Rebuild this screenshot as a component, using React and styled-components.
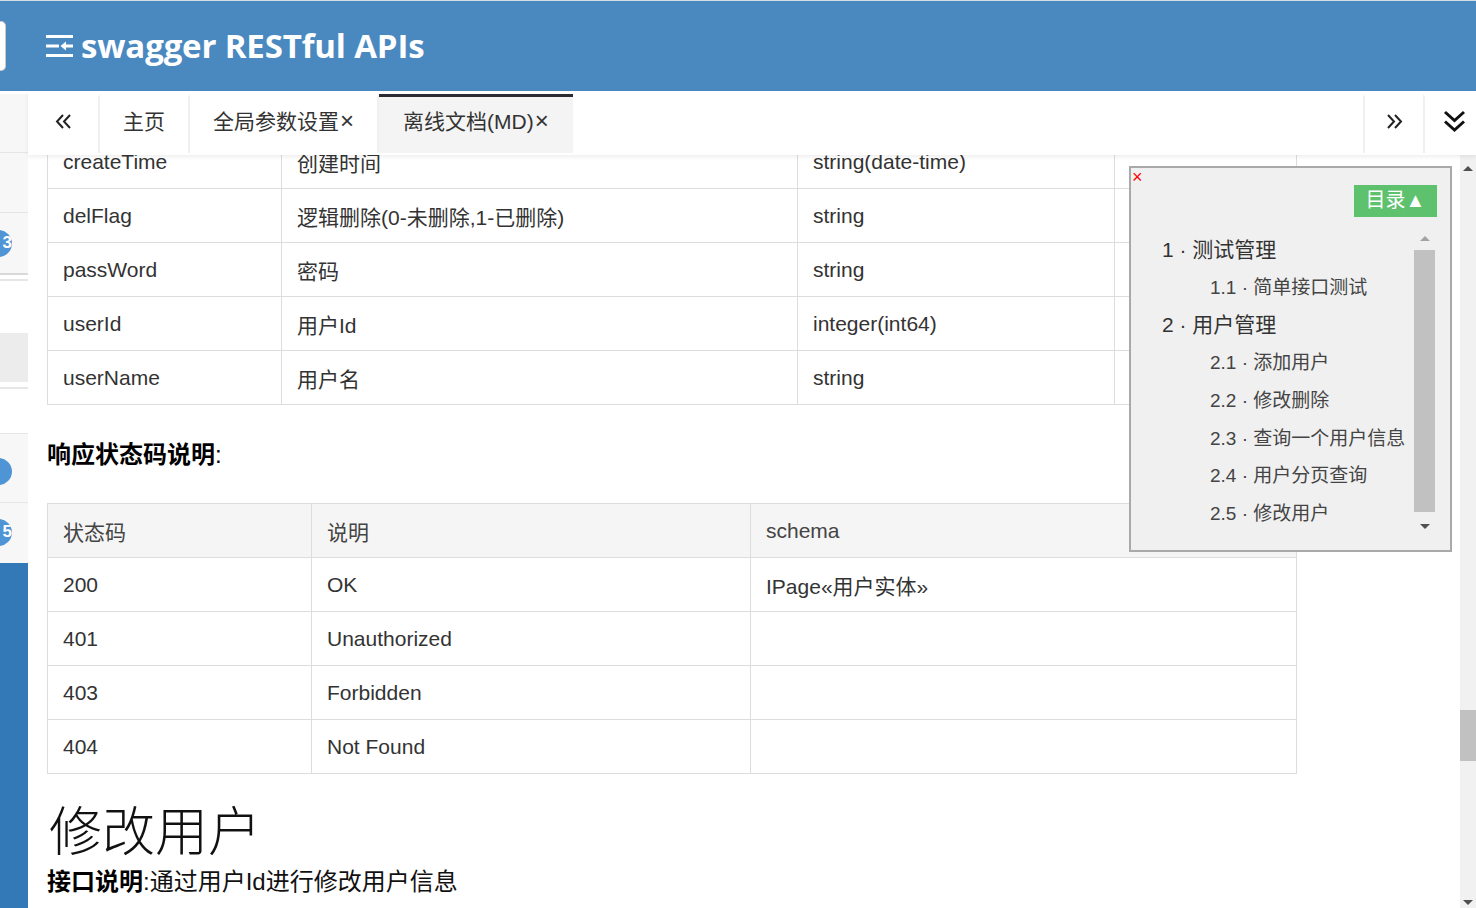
import React from 'react';
import styled, { createGlobalStyle } from 'styled-components';

const GlobalStyle = createGlobalStyle`
  html, body { margin: 0; padding: 0; height: 100%; overflow: hidden; background: #fff; }
  body { font-family: "Liberation Sans", "Noto Sans CJK SC", sans-serif; color: #333; }
  #root { height: 100%; }
`;

const FONT = `"Liberation Sans", "Noto Sans CJK SC", sans-serif`;

const Page = styled.div`
  display: flex;
  flex-direction: column;
  width: 1476px;
  height: 908px;
  overflow: hidden;
`;

/* ---------- header ---------- */
const Header = styled.header`
  flex: none;
  height: 91px;
  box-sizing: border-box;
  border-top: 1px solid #d6dde4;
  background: #4a89c0;
  display: flex;
  align-items: center;
`;

const SearchStub = styled.div`
  flex: none;
  width: 6px;
  height: 50px;
  box-sizing: border-box;
  background: #fff;
  border: 1px solid #c9c9c9;
  border-left: none;
  border-radius: 0 5px 5px 0;
`;

const Brand = styled.div`
  display: flex;
  align-items: center;
  gap: 8px;
  margin-left: 40px;
  color: #fff;
`;

const BrandTitle = styled.h1`
  margin: 0;
  font-family: "Open Sans", "Noto Sans", sans-serif;
  font-weight: 700;
  font-size: 33px;
  line-height: 40px;
  color: #fff;
  letter-spacing: -0.15px;
`;

/* ---------- body ---------- */
const Body = styled.div`
  flex: 1;
  min-height: 0;
  display: flex;
`;

const Sidebar = styled.aside`
  flex: none;
  width: 28px;
  display: flex;
  flex-direction: column;
  overflow: hidden;
`;

const SideSlot = styled.div`
  flex: ${p => (p.$grow ? '1' : 'none')};
  height: ${p => (p.$grow ? 'auto' : `${p.$h}px`)};
  box-sizing: border-box;
  background: ${p => p.$bg || '#f7f7f7'};
  border-top: ${p => p.$top || 'none'};
  border-bottom: ${p => p.$bottom || 'none'};
  display: flex;
  align-items: center;
  overflow: hidden;
`;

const SideBadge = styled.span`
  flex: none;
  width: 30px;
  height: 27px;
  margin-left: -18px;
  margin-top: ${p => p.$dy || 0}px;
  border-radius: 14px;
  background: #4f94d4;
  color: #fff;
  font: bold 17px ${FONT};
  display: flex;
  align-items: center;
  justify-content: flex-end;
  padding-right: 0;
  box-sizing: border-box;
`;

const Main = styled.div`
  flex: 1;
  min-width: 0;
  display: flex;
  flex-direction: column;
`;

/* ---------- tabs ---------- */
const TabBar = styled.nav`
  flex: none;
  height: 64px;
  box-sizing: border-box;
  padding-top: 3px;
  background: #fff;
  display: flex;
  align-items: flex-start;
  position: relative;
  z-index: 2;
  box-shadow: 0 2px 4px rgba(0, 0, 0, 0.07);
`;

const Tab = styled.div`
  flex: none;
  height: 59px;
  box-sizing: border-box;
  padding: 0 ${p => p.$pad ?? 23}px 7px ${p => p.$padL ?? p.$pad ?? 23}px;
  width: ${p => (p.$w ? `${p.$w}px` : 'auto')};
  display: flex;
  align-items: center;
  justify-content: ${p => (p.$center ? 'center' : 'flex-start')};
  font-size: 21px;
  color: #333;
  white-space: nowrap;
  border-top: 3px solid ${p => (p.$active ? '#2b2b36' : 'transparent')};
  background: ${p => (p.$active ? '#f4f4f4' : '#fff')};
  border-right: ${p => (p.$sep ? '2px solid #f0f0f0' : 'none')};
  border-left: ${p => (p.$sepL ? '2px solid #f0f0f0' : 'none')};
`;

const TabLabel = styled.span`
  line-height: 30px;
`;

const TabSpacer = styled.div`
  flex: 1;
`;

const Close = styled.span`
  margin-left: 1px;
  font-size: 24px;
`;

const Icon = styled.svg`
  flex: none;
  display: block;
  width: ${p => p.$w}px;
  height: ${p => p.$h}px;
`;

/* ---------- content ---------- */
const ContentRow = styled.div`
  flex: 1;
  min-height: 0;
  display: flex;
  position: relative;
`;

const Viewport = styled.div`
  flex: 1;
  min-width: 0;
  overflow: hidden;
`;

const Scrolled = styled.div`
  padding-left: 19px;
  transform: translateY(-21px);
`;

const Table = styled.div`
  width: 1250px;
  box-sizing: border-box;
  border-top: 1px solid #dddddd;
  border-left: 1px solid #dddddd;
  margin-top: ${p => p.$mt || 0}px;
`;

const Row = styled.div`
  display: grid;
  grid-template-columns: ${p => p.$cols};
  background: ${p => (p.$head ? '#f5f5f5' : '#fff')};
`;

const Cell = styled.div`
  height: 54px;
  box-sizing: border-box;
  border-right: 1px solid #dddddd;
  border-bottom: 1px solid #dddddd;
  padding: 0 15px;
  display: flex;
  align-items: center;
  font-size: 21px;
  color: ${p => (p.$head ? '#444' : '#333')};
  white-space: nowrap;
  overflow: hidden;
`;

const SectionLabel = styled.div`
  margin-top: 32px;
  font-size: 24px;
  line-height: 36px;
  color: #000;
  b { font-weight: 700; }
`;

const Title = styled.h2`
  margin: 24px 0 0 2px;
  font-family: "Noto Sans CJK SC", sans-serif;
  font-weight: 300;
  font-size: 53px;
  line-height: 60px;
  color: #111;
`;

const Desc = styled.p`
  margin: 9px 0 0;
  font-size: 24px;
  line-height: 30px;
  color: #111;
  b { font-weight: 700; color: #000; }
`;

/* ---------- page scrollbar ---------- */
const ScrollBar = styled.div`
  flex: none;
  width: 16px;
  background: #f1f1f1;
  display: flex;
  flex-direction: column;
  align-items: center;
`;

const ArrowBtn = styled.div`
  flex: none;
  height: 17px;
  width: 100%;
  display: flex;
  align-items: center;
  justify-content: center;
  margin-top: ${p => p.$mt || 0}px;
  margin-bottom: ${p => p.$mb || 0}px;
`;

const Tri = styled.span`
  width: 0;
  height: 0;
  border-left: ${p => p.$w / 2}px solid transparent;
  border-right: ${p => p.$w / 2}px solid transparent;
  ${p => (p.$down ? 'border-top' : 'border-bottom')}: ${p => p.$h}px solid ${p => p.$c || '#505050'};
`;

const Track = styled.div`
  flex: 1;
  width: 100%;
  display: flex;
  flex-direction: column;
  align-items: stretch;
`;

const Thumb = styled.div`
  flex: none;
  margin-top: ${p => p.$mt}px;
  height: ${p => p.$h}px;
  background: #c1c1c1;
`;

/* ---------- TOC overlay ---------- */
const Toc = styled.div`
  position: absolute;
  left: 1101px;
  top: 11px;
  z-index: 3;
  width: 323px;
  height: 386px;
  box-sizing: border-box;
  background: #f0f0f0;
  border: 2px solid #a9a9a9;
  display: flex;
  flex-direction: column;
`;

const TocClose = styled.span`
  align-self: flex-start;
  height: 15px;
  margin-top: 2px;
  margin-left: 1px;
  font: 18px/15px ${FONT};
  color: #ff0000;
`;

const TocButton = styled.button`
  align-self: flex-end;
  margin: 0 13px 0 0;
  width: 83px;
  height: 32px;
  border: none;
  padding: 0 0 2px;
  background: #5dc16e;
  color: #fff;
  font: 20px/30px ${FONT};
  display: flex;
  align-items: center;
  justify-content: center;
`;

const TocBody = styled.div`
  margin-top: 13px;
  display: flex;
  height: 308px;
  margin-right: 15px;
`;

const TocList = styled.ul`
  flex: 1;
  list-style: none;
  margin: 0;
  padding: 0 0 0 31px;
  overflow: hidden;
`;

const TocItem = styled.li`
  height: 37.7px;
  display: flex;
  align-items: center;
  padding-left: ${p => (p.$sub ? 48 : 0)}px;
  padding-bottom: 2px;
  box-sizing: border-box;
  font-size: ${p => (p.$sub ? 19 : 21)}px;
  color: ${p => (p.$sub ? '#444' : '#333')};
  white-space: nowrap;
`;

const TocScroll = styled.div`
  flex: none;
  width: 21px;
  display: flex;
  flex-direction: column;
`;

const TocThumb = styled.div`
  flex: none;
  height: 262px;
  margin-top: 3px;
  background: #c1c1c1;
`;

/* ---------- icons ---------- */
const IndentIcon = () => (
  <Icon $w={27} $h={22} viewBox="0 0 27 22" fill="#fff" aria-hidden="true">
    <rect x="0" y="0" width="27" height="3" />
    <rect x="0" y="9.5" width="13" height="3" />
    <path d="M14.5 11 L20 6.5 V15.5 Z" />
    <rect x="19" y="9.5" width="8" height="3" />
    <rect x="0" y="19" width="27" height="3" />
  </Icon>
);

const DoubleLeft = () => (
  <Icon $w={17} $h={15} viewBox="0 0 17 15" fill="none" stroke="#222" strokeWidth="2" aria-hidden="true">
    <path d="M8 1 L2 7.5 L8 14" />
    <path d="M15 1 L9 7.5 L15 14" />
  </Icon>
);

const DoubleRight = () => (
  <Icon $w={17} $h={15} viewBox="0 0 17 15" fill="none" stroke="#222" strokeWidth="2" aria-hidden="true">
    <path d="M2 1 L8 7.5 L2 14" />
    <path d="M9 1 L15 7.5 L9 14" />
  </Icon>
);

const DoubleDown = () => (
  <Icon $w={23} $h={23} viewBox="0 0 23 23" fill="none" stroke="#111" strokeWidth="3" aria-hidden="true">
    <path d="M2 2 L11.5 10.5 L21 2" />
    <path d="M2 11.5 L11.5 20 L21 11.5" />
  </Icon>
);

/* ---------- data ---------- */
const paramCols = '234px 516px 317px 182px';
const params = [
  ['createTime', '创建时间', 'string(date-time)', ''],
  ['delFlag', '逻辑删除(0-未删除,1-已删除)', 'string', ''],
  ['passWord', '密码', 'string', ''],
  ['userId', '用户Id', 'integer(int64)', ''],
  ['userName', '用户名', 'string', ''],
];

const statusCols = '264px 439px 546px';
const statuses = [
  ['200', 'OK', 'IPage«用户实体»'],
  ['401', 'Unauthorized', ''],
  ['403', 'Forbidden', ''],
  ['404', 'Not Found', ''],
];

const toc = [
  ['1 · 测试管理', false],
  ['1.1 · 简单接口测试', true],
  ['2 · 用户管理', false],
  ['2.1 · 添加用户', true],
  ['2.2 · 修改删除', true],
  ['2.3 · 查询一个用户信息', true],
  ['2.4 · 用户分页查询', true],
  ['2.5 · 修改用户', true],
];

export default function App() {
  return (
    <Page>
      <GlobalStyle />
      <Header>
        <SearchStub />
        <Brand>
          <IndentIcon />
          <BrandTitle>swagger RESTful APIs</BrandTitle>
        </Brand>
      </Header>

      <Body>
        <Sidebar>
          <SideSlot $h={3} $bg="#fff" />
          <SideSlot $h={59} $bottom="1px solid #e5e5e5" />
          <SideSlot $h={60} $bottom="1px solid #e5e5e5" />
          <SideSlot $h={62} $bottom="2px solid #d9d9d9">
            <SideBadge>3</SideBadge>
          </SideSlot>
          <SideSlot $h={6} $bg="#fff" $bottom="2px solid #e6e6e6" />
          <SideSlot $h={52} $bg="#fff" />
          <SideSlot $h={49} $bg="#ececec" />
          <SideSlot $h={7} $bg="#fff" $bottom="2px solid #e6e6e6" />
          <SideSlot $h={44} $bg="#fff" />
          <SideSlot $h={70} $top="1px solid #e6e6e6" $bottom="1px solid #e6e6e6">
            <SideBadge $dy={6} />
          </SideSlot>
          <SideSlot $h={60}>
            <SideBadge $dy={-2}>5</SideBadge>
          </SideSlot>
          <SideSlot $grow $bg="#3479b7" />
        </Sidebar>

        <Main>
          <TabBar>
            <Tab $w={72} $pad={0} $center $sep>
              <DoubleLeft />
            </Tab>
            <Tab $sep>
              <TabLabel>主页</TabLabel>
            </Tab>
            <Tab $sep>
              <TabLabel>
                全局参数设置<Close>×</Close>
              </TabLabel>
            </Tab>
            <Tab $active $pad={24}>
              <TabLabel>
                离线文档(MD)<Close>×</Close>
              </TabLabel>
            </Tab>
            <TabSpacer />
            <Tab $w={60} $pad={0} $center $sepL>
              <DoubleRight />
            </Tab>
            <Tab $w={53} $pad={0} $padL={7} $center $sepL>
              <DoubleDown />
            </Tab>
          </TabBar>

          <ContentRow>
            <Viewport>
              <Scrolled>
                <Table>
                  {params.map(r => (
                    <Row key={r[0]} $cols={paramCols}>
                      {r.map((c, i) => (
                        <Cell key={i}>{c}</Cell>
                      ))}
                    </Row>
                  ))}
                </Table>

                <SectionLabel>
                  <b>响应状态码说明</b>:
                </SectionLabel>

                <Table $mt={30}>
                  <Row $head $cols={statusCols}>
                    <Cell $head>状态码</Cell>
                    <Cell $head>说明</Cell>
                    <Cell $head>schema</Cell>
                  </Row>
                  {statuses.map(r => (
                    <Row key={r[0]} $cols={statusCols}>
                      {r.map((c, i) => (
                        <Cell key={i}>{c}</Cell>
                      ))}
                    </Row>
                  ))}
                </Table>

                <Title>修改用户</Title>
                <Desc>
                  <b>接口说明</b>:通过用户Id进行修改用户信息
                </Desc>
              </Scrolled>
            </Viewport>

            <ScrollBar>
              <ArrowBtn $mt={5}>
                <Tri $w={11} $h={5} />
              </ArrowBtn>
              <Track>
                <Thumb $mt={533} $h={51} />
              </Track>
              <ArrowBtn $mb={-3}>
                <Tri $w={11} $h={5} $down />
              </ArrowBtn>
            </ScrollBar>

            <Toc>
              <TocClose>×</TocClose>
              <TocButton>目录▲</TocButton>
              <TocBody>
                <TocList>
                  {toc.map(([t, sub]) => (
                    <TocItem key={t} $sub={sub}>
                      {t}
                    </TocItem>
                  ))}
                </TocList>
                <TocScroll>
                  <ArrowBtn>
                    <Tri $w={11} $h={5} $c="#a3a3a3" />
                  </ArrowBtn>
                  <TocThumb />
                  <ArrowBtn $mt={6}>
                    <Tri $w={11} $h={5} $down />
                  </ArrowBtn>
                </TocScroll>
              </TocBody>
            </Toc>
          </ContentRow>
        </Main>
      </Body>
    </Page>
  );
}
